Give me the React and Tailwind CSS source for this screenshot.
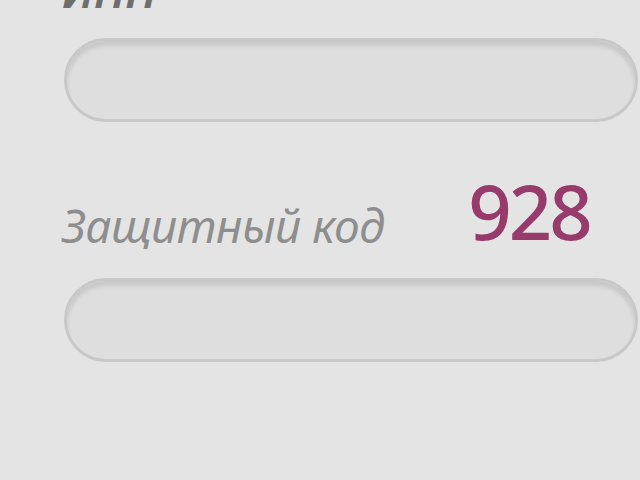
export default function App() {
  const font = { fontFamily: '"Noto Sans", "Open Sans", sans-serif' };
  return (
    <div className="w-[640px] h-[480px] overflow-hidden bg-[#e4e4e4] relative" style={font}>
      <div className="pl-[64px] pr-[2px]">
        <div className="h-[38px] relative">
          <span className="absolute left-[-2px] top-[-33px] text-[46px] leading-none italic font-semibold text-[#6e6e6e]">ИНН</span>
        </div>
        <div className="h-[84px] rounded-full border-[3px] border-[#c8c8c8] bg-[#dedede] shadow-[inset_0_5px_4px_rgba(0,0,0,0.10)]"></div>
        <div className="h-[156px] flex items-end pb-[30px]">
          <span className="ml-[-2px] text-[46px] leading-none italic text-[#8e8e8e] tracking-[-0.5px]">Защитный код</span>
          <span className="ml-[84px] text-[76px] leading-none font-medium text-[#973b6c] tracking-[-3px] mb-[-1px]">928</span>
        </div>
        <div className="h-[84px] rounded-full border-[3px] border-[#c8c8c8] bg-[#dedede] shadow-[inset_0_5px_4px_rgba(0,0,0,0.10)]"></div>
      </div>
    </div>
  );
}
